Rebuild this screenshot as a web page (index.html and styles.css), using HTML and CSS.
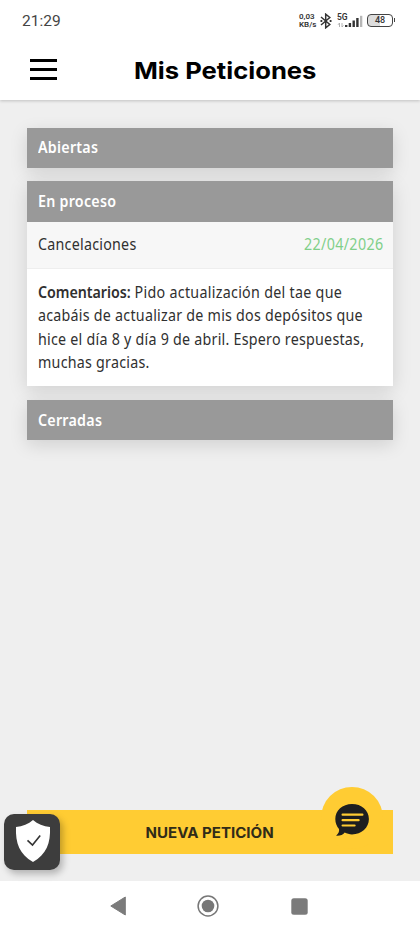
FILE: index.html
```html
<!DOCTYPE html>
<html lang="es">
<head>
<meta charset="utf-8">
<meta name="viewport" content="width=device-width, initial-scale=1">
<title>Mis Peticiones</title>
<link rel="stylesheet" href="styles.css">
</head>
<body>
<div class="app">
  <header class="top">
    <div class="status">
      <span class="clock">21:29</span>
      <div class="status-icons">
        <div class="speed"><span>0,03</span><span>KB/s</span></div>
        <svg class="bluetooth" width="12" height="16" viewBox="0 0 12 16" fill="none" stroke="#333" stroke-width="1.500"><path d="M1 4 9.800 11.500 5.700 14.800V1.200L9.800 4.500 1 12"/><path d="M.5 8h1.800M9.700 8h1.800" stroke-width="1.800"/></svg>
        <div class="network">
          <span class="gen">5G</span>
          <svg width="26" height="14" viewBox="0 0 26 14"><path d="M2.500 9v4M1 10.800 2.500 9M5 9v4l1.400-1.600" fill="none" stroke="#aaa" stroke-width=".9"/><g fill="#333"><rect x="8" y="11" width="2.400" height="2"/><rect x="11.700" y="9" width="2.400" height="4"/><rect x="15.500" y="6.500" width="2.400" height="6.500"/><rect x="19.200" y="4" width="2.400" height="9"/></g><rect x="23" y="1.800" width="2.300" height="11.200" fill="#b7b7b7"/></svg>
        </div>
        <div class="battery"><span>48</span></div>
      </div>
    </div>
    <div class="title-bar">
      <button class="menu" aria-label="Menú"><i></i><i></i><i></i></button>
      <h1>Mis Peticiones</h1>
    </div>
  </header>

  <main>
    <section class="card"><h2 class="first"><span>Abiertas</span></h2></section>
    <section class="card">
      <h2><span>En proceso</span></h2>
      <div class="row"><span class="type">Cancelaciones</span><span class="date">22/04/2026</span></div>
      <p class="comment">
        <span><b>Comentarios:</b> Pido actualización del tae que</span>
        <span>acabáis de actualizar de mis dos depósitos que</span>
        <span>hice el día 8 y día 9 de abril. Espero respuestas,</span>
        <span>muchas gracias.</span>
      </p>
    </section>
    <section class="card"><h2><span>Cerradas</span></h2></section>
    <div class="action">
      <button class="new"><span>NUEVA PETICIÓN</span></button>
      <div class="chat">
        <svg width="36" height="34" viewBox="0 0 36 34"><path d="M18 1C8.500 1 1.300 7.500 1.300 16c0 4 1.500 7.500 3.700 10.100.5 2.300-.5 4.600-2.900 6.600 4 .3 6.700-.9 8.600-3.200 2.200 1 4.600 1.900 7.300 1.900C27.500 31.400 34.900 24.800 34.900 16S27.500 1 18 1Z" fill="#1d1e20"/><path d="M8.600 11.700h19.800M8.600 17.200h16M8.600 22.500h12" stroke="#ffcc33" stroke-width="2.200" stroke-linecap="round"/></svg>
      </div>
      <div class="security">
        <svg width="36" height="44" viewBox="0 0 36 44"><path d="M18 1C13.500 5 7.500 7.200 1 8c-.7 16 3.500 27.500 17 35C31.500 35.500 35.700 24 35 8 28.500 7.200 22.500 5 18 1Z" fill="#fff"/><path d="m12.500 21.300 5 4.700 7.700-9.500" fill="none" stroke="#333" stroke-width="1.600"/></svg>
      </div>
    </div>
  </main>

  <nav>
    <svg width="16" height="20" viewBox="0 0 16 20"><path d="M15.300 1v18L.8 10Z" fill="#7b7b7b" stroke="#7b7b7b" stroke-linejoin="round"/></svg>
    <svg width="22" height="22" viewBox="0 0 22 22"><circle cx="11" cy="11" r="9.900" fill="none" stroke="#777" stroke-width="1.500"/><circle cx="11" cy="11" r="6.300" fill="#777"/></svg>
    <svg width="17" height="17" viewBox="0 0 17 17"><rect x=".3" y=".3" width="16.400" height="16.400" rx="2.500" fill="#7b7b7b"/></svg>
  </nav>
</div>
</body>
</html>
```
FILE: styles.css
```css
* { box-sizing: border-box; }
body { margin: 0; background: #efefef; color: #303030; font-family: "Noto Sans", sans-serif; }
button { border: 0; padding: 0; background: none; color: inherit; }
svg { display: block; }
.app { width: 420px; height: 934px; display: flex; flex-direction: column; overflow: hidden; }

.top { height: 100px; background: #fff; box-shadow: 0 1px 3px rgba(0,0,0,.2); flex: none; }
.status { height: 41px; padding: 0 27px 0 22px; display: flex; align-items: center; justify-content: space-between; font-family: Roboto, sans-serif; }
.clock { font-size: 15.5px; line-height: 20px; color: #444; }
.status-icons { display: flex; align-items: center; }
.speed { width: 19px; display: flex; flex-direction: column; font-size: 8px; line-height: 8px; font-weight: 600; white-space: nowrap; color: #333; }
.speed span { height: 8px; }
.bluetooth { margin: 0 5px 0 2px; }
.network { position: relative; width: 26px; margin-right: 4px; }
.gen { position: absolute; left: 0; top: -1px; font-size: 8.5px; line-height: 8px; font-weight: 600; color: #333; }
.battery { position: relative; width: 26px; height: 13px; border: 1.5px solid #444; border-radius: 4px; background: linear-gradient(90deg, #ddd 48%, #fff 48%); font-size: 9px; line-height: 11px; font-weight: 500; text-align: center; color: #333; }
.battery::after { content: ""; position: absolute; right: -3px; top: 3px; width: 1.5px; height: 4px; background: #444; }
.title-bar { height: 59px; display: flex; align-items: center; padding: 0 30px; }
.menu { width: 27px; margin-bottom: 2px; display: flex; flex-direction: column; gap: 6px; }
.menu i { height: 3px; background: #000; }
h1 { margin: 0 0 0 77px; font: 700 23.5px/30px Inter, sans-serif; color: #000; white-space: nowrap; transform: scaleX(1.09); transform-origin: left; }

main { flex: 1; padding: 27.5px 27px 27px; display: flex; flex-direction: column; gap: 13.5px; }
.card { background: #fff; box-shadow: 0 5px 18px rgba(0,0,0,.13); }
h2 { margin: 0; height: 40.3px; padding-left: 11px; background: #999; color: #fff; font-size: 15.5px; line-height: 40px; font-weight: 600; }
h2.first { line-height: 39px; }
.row { height: 47.5px; padding: 0 10px 0 11px; display: flex; justify-content: space-between; background: #f7f7f7; border-bottom: 1.5px solid #eee; font-size: 15.5px; line-height: 45px; }
.date { color: #80cf89; }
.comment { margin: 0; padding: 11.5px 11px; font-size: 15.5px; line-height: 23.5px; white-space: nowrap; }
.comment span { display: block; width: max-content; }
h2 span, .type, .date, .comment span { letter-spacing: .27px; transform: scaleX(.92); transform-origin: left; }
h2 span { display: inline-block; }
.date { letter-spacing: .4px; transform-origin: right; }
b { font-weight: 600; letter-spacing: -.05px; }
.comment span:first-child { letter-spacing: .32px; }
.action { position: relative; margin-top: auto; height: 44.5px; }
.new { width: 100%; height: 100%; background: #fc3; color: #302b18; font: 700 14px/45px Inter, sans-serif; }
.new span { display: inline-block; transform: scaleX(1.075); }
.chat { position: absolute; left: 294px; top: -22.5px; width: 62px; height: 62px; border-radius: 50%; background: #fc3; padding: 16px 0 0 13px; }
.security { position: absolute; left: -23px; top: 4.5px; width: 56px; height: 56px; border-radius: 10px; background: #3d3d3d; box-shadow: 3px 4px 7px rgba(0,0,0,.25); padding: 5px 0 0 10.5px; }
nav { flex: none; height: 53px; background: #fff; display: flex; align-items: center; padding: 0 0 3px 109.5px; }
nav svg:nth-child(2) { margin: 0 72px 0 71.5px; }
```
